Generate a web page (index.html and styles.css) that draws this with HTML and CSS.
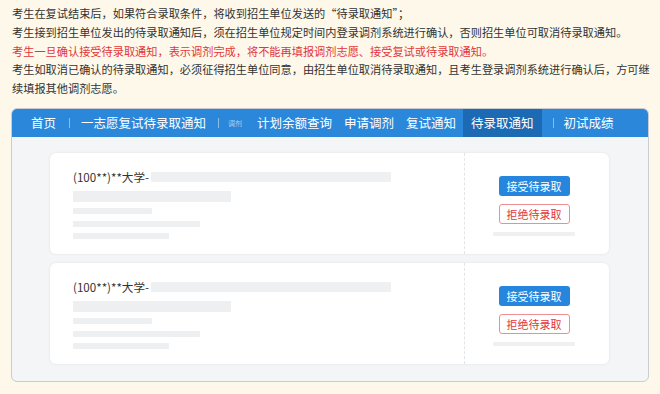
FILE: index.html
```html
<!DOCTYPE html>
<html lang="zh-CN">
<head>
    <meta charset="UTF-8">
    <meta name="viewport" content="width=device-width, initial-scale=1.0">
    <title>待录取通知</title>
    <link rel="stylesheet" href="styles.css">
</head>
<body>
    <div class="notes">
        <p>考生在复试结束后，如果符合录取条件，将收到招生单位发送的“待录取通知”；</p>
        <p>考生接到招生单位发出的待录取通知后，须在招生单位规定时间内登录调剂系统进行确认，否则招生单位可取消待录取通知。</p>
        <p class="warn">考生一旦确认接受待录取通知，表示调剂完成，将不能再填报调剂志愿、接受复试或待录取通知。</p>
        <p>考生如取消已确认的待录取通知，必须征得招生单位同意，由招生单位取消待录取通知，且考生登录调剂系统进行确认后，方可继续填报其他调剂志愿。</p>
    </div>

    <div class="panel">
        <div class="nav">
            <span class="nav-item">首页</span>
            <span class="sep"></span>
            <span class="nav-item">一志愿复试待录取通知</span>
            <span class="sep to-tag"></span>
            <span class="tag">调剂</span>
            <span class="nav-item">计划余额查询</span>
            <span class="nav-item">申请调剂</span>
            <span class="nav-item">复试通知</span>
            <span class="nav-item active">待录取通知</span>
            <span class="sep last"></span>
            <span class="nav-item">初试成绩</span>
        </div>

        <div class="list">
            <div class="card">
                <div class="info">
                    <div class="title">(100**)**大学- <span class="blur name"></span></div>
                    <span class="blur b1"></span>
                    <span class="blur b2"></span>
                    <span class="blur b3"></span>
                    <span class="blur b4"></span>
                </div>
                <div class="actions">
                    <button class="btn accept">接受待录取</button>
                    <button class="btn reject">拒绝待录取</button>
                    <span class="blur foot"></span>
                </div>
            </div>
            <div class="card">
                <div class="info">
                    <div class="title">(100**)**大学- <span class="blur name"></span></div>
                    <span class="blur b1"></span>
                    <span class="blur b2"></span>
                    <span class="blur b3"></span>
                    <span class="blur b4"></span>
                </div>
                <div class="actions">
                    <button class="btn accept">接受待录取</button>
                    <button class="btn reject">拒绝待录取</button>
                    <span class="blur foot"></span>
                </div>
            </div>
        </div>
    </div>
</body>
</html>
```

FILE: styles.css
```css
body {
    margin: 0;
    background: #fdf8e9;
    font-family: "Noto Sans CJK SC", "Noto Sans", sans-serif;
    color: #333;
}
.notes { padding: 4px 6px 0 12px; font-size: 11.2px; line-height: 18.8px; }
.notes p { margin: 0; }
.notes .warn { color: #e2363b; }

.panel {
    margin: 10px 11px 0 11px;
    background: #f3f5f7;
    border: 1px solid #c9ccd0;
    border-radius: 6px;
    overflow: hidden;
    padding-bottom: 17px;
}
.nav {
    display: flex;
    align-items: center;
    height: 28px;
    background: #2b87d9;
    color: #fff;
    font-size: 12.5px;
    padding-left: 13px;
}
.nav-item { padding: 0 6px; line-height: 28px; white-space: nowrap; }
.nav-item.active { background: #1c6ab3; padding: 0 8px; margin-left: 1px; }
.sep { width: 1px; height: 10px; background: rgba(255, 255, 255, 0.45); margin: 0 5px 0 7px; }
.sep.to-tag { margin: 0 9px 0 6px; }
.sep.last { margin: 0 4px 0 11px; }
.tag { font-size: 7px; color: #a9cdf0; margin-right: 9px; }

.list { padding: 16px 39px 0 38px; display: flex; flex-direction: column; gap: 9px; }
.card {
    display: flex;
    background: #fff;
    border-radius: 6px;
    box-shadow: 0 0 3px rgba(0, 0, 0, 0.08);
    height: 101px;
}
.info { flex: 1; padding: 16px 0 0 23px; display: flex; flex-direction: column; border-right: 1px dashed #e2e5e8; }
.title { display: flex; align-items: center; font-size: 11.6px; line-height: 16px; color: #333; margin-bottom: 6px; }
.blur { display: block; background: #eeeff1; border-radius: 1px; }
.name { width: 240px; height: 10px; margin-left: 2px; background: #eff0f2; }
.b1 { width: 158px; height: 11px; margin-bottom: 6px; }
.b2 { width: 79px; height: 6px; margin-bottom: 7px; }
.b3 { width: 127px; height: 6px; margin-bottom: 6px; }
.b4 { width: 96px; height: 6px; }

.actions { width: 138px; display: flex; flex-direction: column; align-items: center; padding: 23px 6px 0 0; }
.btn {
    width: 71px;
    height: 20px;
    font-family: inherit;
    font-size: 11px;
    border-radius: 3px;
    padding: 0;
    cursor: pointer;
}
.accept { background: #2685dd; color: #fff; border: none; margin-bottom: 8px; }
.reject { background: #fff; color: #e2363b; border: 1px solid #ef8e90; }
.foot { width: 82px; height: 4px; margin-top: 8px; background: #eef0f2; }
```
